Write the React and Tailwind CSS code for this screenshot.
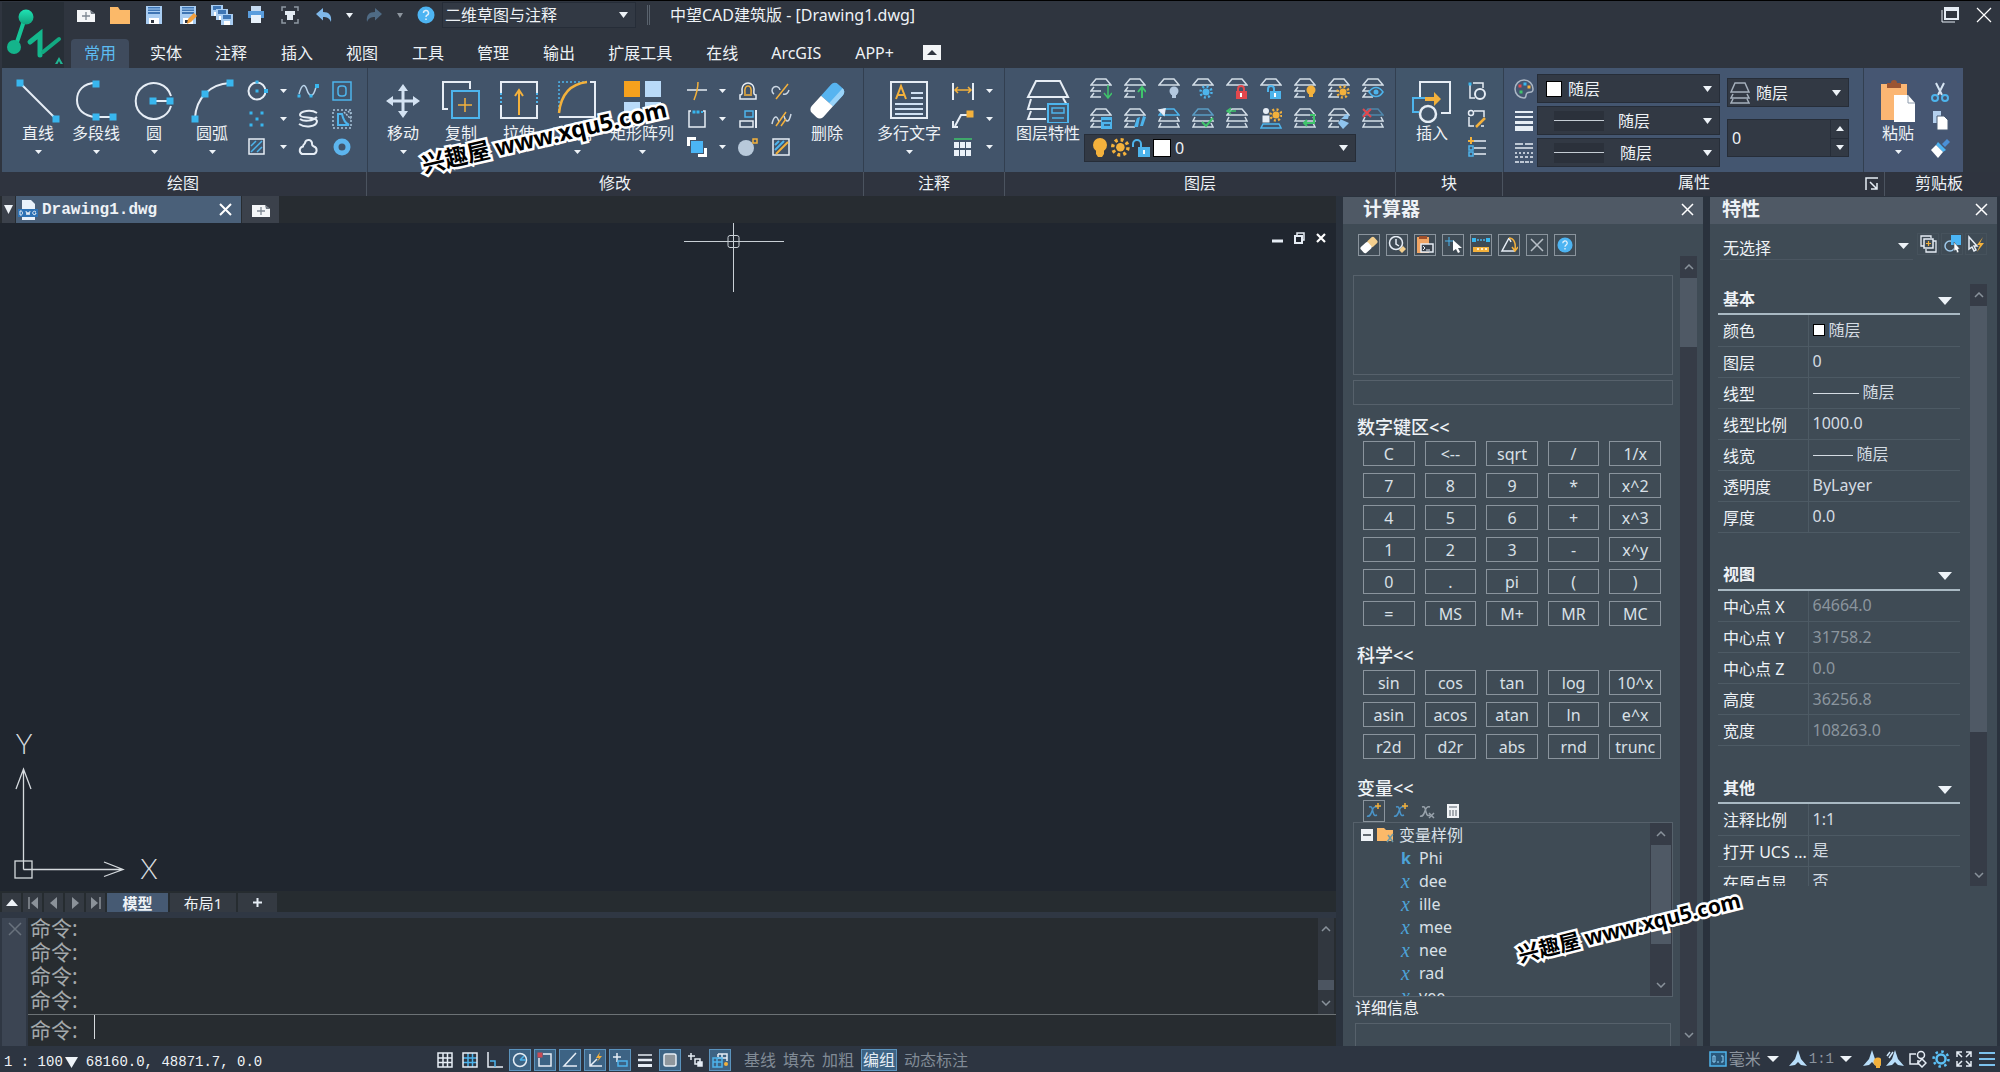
import React from "react";

const W = "#e6edf5";
const B = "#4db4ec";
const O = "#f3b13c";
const G = "#3fc46b";
const R = "#e2484d";

const Icon = ({ size = 22, w, h, children }) => (
  <svg
    width={w || size}
    height={h || size}
    viewBox={`0 0 ${w || size} ${h || size}`}
    fill="none"
    stroke={W}
    strokeWidth="1.5"
    className="block shrink-0"
    aria-hidden="true"
  >
    {children}
  </svg>
);

const Sq = ({ x, y, s = 6, c = "#38b6ee" }) => <rect x={x - s / 2} y={y - s / 2} width={s} height={s} fill={c} stroke="none" />;

const Caret = ({ w = 8, h = 5, className = "fill-[#eef3f8]" }) => (
  <svg width={w} height={h} viewBox="0 0 10 6" preserveAspectRatio="none" className={`block shrink-0 ${className}`} aria-hidden="true">
    <path d="M0 0h10l-5 6z" />
  </svg>
);

const Cross = ({ size = 14, sw = 1.5, color = "#fff" }) => (
  <Icon size={size}>
    <path d={`M1 1L${size - 1} ${size - 1}M${size - 1} 1L1 ${size - 1}`} stroke={color} strokeWidth={sw} />
  </Icon>
);

const Help = ({ size = 18 }) => (
  <svg width={size} height={size} viewBox="0 0 18 18" className="block" aria-hidden="true">
    <circle cx="9" cy="9" r="8.5" fill="#4db4f2" />
    <path d="M6.5 7a2.5 2.5 0 1 1 3.6 2.2c-.8.5-1.1.8-1.1 1.8M9 12.5v1.6" fill="none" stroke="#dff0fc" strokeWidth="1.5" />
  </svg>
);

/* ---------- quick access ---------- */

const NewFile = () => (
  <Icon w={18} h={14}>
    <path d="M0 2h13l5 4v8H0z" fill="#f4f6f8" stroke="none" />
    <path d="M13 2l5 4h-4z" fill="#6d7680" stroke="none" />
    <path d="M9 4v8M5 8h8" stroke="#7d8792" strokeWidth="1.3" />
  </Icon>
);

const Floppy = ({ pen }) => (
  <Icon size={18}>
    <path d="M1 0h16v18H1z" fill="#a9cdf2" stroke="none" />
    <path d="M3 1h12v7H3z" fill="#3f76b5" stroke="none" />
    <path d="M3 3h12M3 5.500h12" stroke="#a9cdf2" strokeWidth="1" />
    <path d="M4 12h10v6H4z" fill="#fff" stroke="none" />
    <path d="M6 14h3v3H6z" fill="#2f353f" stroke="none" />
    {pen && <path d="M8 18l1-5 6-6 3 3-6 6z" fill="#f3a03c" stroke="none" />}
  </Icon>
);

const Folder = () => (
  <Icon w={20} h={18}>
    <path d="M0 1h8l2 3h10v14H0z" fill="#fbb969" stroke="none" />
  </Icon>
);

const SaveAll = () => (
  <Icon w={22} h={20}>
    {[[0, 0], [5, 4], [10, 9]].map(([x, y]) => (
      <g key={x} stroke="none">
        <rect x={x} y={y} width="12" height="11" fill="#a9cdf2" />
        <rect x={x + 2} y={y + 1} width="8" height="4" fill="#3f76b5" />
        <rect x={x + 3} y={y + 7} width="6" height="4" fill="#fff" />
      </g>
    ))}
  </Icon>
);

const Printer = () => (
  <Icon size={18}>
    <path d="M4 0h10v5H4z" fill="#c5daf0" stroke="none" />
    <path d="M1 5h16v7H1z" fill="#5a9ddd" stroke="none" />
    <path d="M4 9h10v8H4z" fill="#e8f1fa" stroke="none" />
  </Icon>
);

const Preview = () => (
  <Icon size={18}>
    <path d="M1 5V1h4M13 1h4v4M17 13v4h-4M5 17H1v-4" stroke="#8e98a3" />
    <path d="M4 5h10v4h-2v5H6V9H4z" fill="#e3ebf3" stroke="none" />
  </Icon>
);

const Arrow = ({ flip, color }) => (
  <Icon w={16} h={14}>
    <g transform={flip ? "matrix(-1 0 0 1 16 0)" : undefined}>
      <path d="M0 6l7-6v4c6 0 9 3 8 10-1.500-4-4-5-8-5v3.500z" fill={color} stroke="none" />
    </g>
  </Icon>
);

const Logo = () => (
  <svg width="67" height="68" viewBox="0 0 67 68" className="block shrink-0" aria-label="ZWCAD">
    <defs>
      <linearGradient id="lg" x1="0" y1="0" x2="0" y2="1">
        <stop offset="0" stopColor="#1fe3b4" />
        <stop offset="1" stopColor="#11a27c" />
      </linearGradient>
    </defs>
    <rect x="2" y="1" width="62" height="67" fill="#272e36" />
    <g fill="none" stroke="#16c698" strokeLinecap="round">
      <path d="M25 17L15 47" strokeWidth="4" />
      <path d="M30 41l10-8v21" strokeWidth="5" stroke="#14b78c" />
      <path d="M43 51l16-13" strokeWidth="4" stroke="#12a981" />
    </g>
    <circle cx="26" cy="16" r="7.500" fill="url(#lg)" />
    <circle cx="14" cy="46" r="7" fill="#14b48b" />
    <path d="M55 63l4-7 4 7h-2.500l-1.500-3-1.500 3z" fill="#21b593" />
  </svg>
);

/* ---------- ribbon: large icons ---------- */

const LineIcon = () => (
  <Icon size={44}>
    <path d="M4 4l36 36" strokeWidth="2" />
    <Sq x={4} y={4} s={7} /><Sq x={40} y={40} s={7} />
  </Icon>
);
const PolylineIcon = () => (
  <Icon size={44}>
    <path d="M22 4C9 4 3 12 3 21s6 16 19 17h16" strokeWidth="2" />
    <Sq x={22} y={5} s={7} /><Sq x={22} y={38} s={7} /><Sq x={39} y={38} s={7} />
  </Icon>
);
const CircleIcon = () => (
  <Icon size={44}>
    <path d="M39 17A18 18 0 1 0 39 27" strokeWidth="2" />
    <path d="M21 22h17" strokeWidth="2" />
    <Sq x={21} y={22} s={7} /><Sq x={38} y={22} s={7} />
  </Icon>
);
const ArcIcon = () => (
  <Icon size={44}>
    <path d="M5 39C6 20 19 5 40 4" strokeWidth="2" />
    <Sq x={5} y={40} s={7} /><Sq x={15} y={15} s={7} /><Sq x={40} y={4} s={7} />
  </Icon>
);
const MoveIcon = () => (
  <Icon size={44}>
    <path d="M22 10v24M10 22h24" strokeWidth="3" stroke="#d3e2f2" />
    <path d="M22 5l5 7H17zM22 39l5-7H17zM5 22l7-5v10zM39 22l-7-5v10z" fill="#d3e2f2" stroke="none" />
  </Icon>
);
const CopyIcon = () => (
  <Icon size={44}>
    <path d="M9 30H4V3h27v7" strokeWidth="2" />
    <rect x="13" y="12" width="27" height="27" stroke={B} strokeWidth="2" />
    <path d="M26 19v14M19 26h14" stroke={O} />
  </Icon>
);
const StretchIcon = () => (
  <Icon size={44}>
    <path d="M4 14V3h36v11M4 26v13h36V26" strokeWidth="2" />
    <path d="M4 14v12M40 14v12" stroke={B} strokeWidth="2" strokeDasharray="2 2" />
    <path d="M22 36V12M18 17l4-6 4 6" stroke={O} strokeWidth="2" />
  </Icon>
);
const FilletIcon = () => (
  <Icon size={44}>
    <path d="M4 38h36V3h-5" strokeWidth="2" />
    <path d="M4 32V3h28" stroke={B} strokeDasharray="2 2" />
    <path d="M4 34C6 15 15 5 32 3" stroke={O} strokeWidth="2.500" />
  </Icon>
);
const ArrayIcon = () => (
  <Icon size={44}>
    <Sq x={12} y={10} s={16} c="#f6a11d" /><Sq x={33} y={10} s={16} c="#b9daf8" />
    <Sq x={12} y={31} s={16} c="#b9daf8" /><Sq x={33} y={31} s={16} c="#b9daf8" />
  </Icon>
);
const EraserIcon = () => (
  <Icon size={44}>
    <g transform="rotate(42 22 22)" stroke="none">
      <path d="M14 22V7a5 5 0 0 1 5-5h6a5 5 0 0 1 5 5v15z" fill="#57b4f0" />
      <path d="M25 2a5 5 0 0 1 5 5v15h-5z" fill="#9ad3f8" />
      <path d="M14 22h16v14a5 5 0 0 1-5 5h-6a5 5 0 0 1-5-5z" fill="#fff" />
    </g>
  </Icon>
);
const MTextIcon = () => (
  <Icon size={44}>
    <rect x="4" y="3" width="36" height="36" strokeWidth="2" />
    <path d="M9 20l5-13 5 13M11 16h6" stroke={O} strokeWidth="2" />
    <path d="M24 14h12M24 19h12M8 25h28M8 30h28M8 35h28" stroke="#cfe0f2" strokeWidth="2" />
  </Icon>
);
const LayersIcon = () => (
  <Icon size={44}>
    <path d="M10 2h24l8 16H2z" strokeWidth="2" />
    <path d="M5 20l-3 10h18M5 32l-3 8h18" strokeWidth="2" />
    <path d="M37 19l4 7" strokeWidth="2" />
    <rect x="22" y="25" width="20" height="19" stroke={B} strokeWidth="2" fill="#42556a" />
    <path d="M26 29h12v5H26zM26 39h12" stroke={B} />
  </Icon>
);
const InsertIcon = () => (
  <Icon size={44}>
    <path d="M10 18V3h30v31h-9" strokeWidth="2" />
    <path d="M3 34V19h12M3 33h6" stroke={B} strokeWidth="2" />
    <path d="M15 18h9v-5l7 7-7 7v-5h-9z" fill={O} stroke="none" />
    <circle cx="18" cy="35" r="8" strokeWidth="2.500" fill="#43566b" />
  </Icon>
);
const PasteIcon = () => (
  <Icon size={44}>
    <path d="M5 5h26v36H5z" fill="#fbb673" stroke="none" />
    <path d="M11 4h4a3 3 0 0 1 6 0h4v5H11z" fill="#9c5532" stroke="none" />
    <path d="M18 16h14l7 8v19H18z" fill="#fff" stroke="none" />
    <path d="M32 16v8h7" stroke="#8e9cad" strokeWidth="1" />
  </Icon>
);

/* ---------- ribbon: small icons ---------- */

const draw = {
  ellipse: <><circle cx="11" cy="11" r="8.500" strokeWidth="2" /><Sq x={11} y={11} s={3} /><Sq x={20} y={11} s={4} /><Sq x={11} y={2} s={3} /></>,
  spline: <><path d="M2 14C5 3 8 4 10 10s6 9 9-3" stroke="#b9d3ea" /><Sq x={2} y={16} s={3} /><Sq x={20} y={6} s={4} /><Sq x={14} y={16} s={3} /></>,
  region: <><rect x="2" y="2" width="18" height="18" stroke={B} /><rect x="7" y="6" width="8" height="10" rx="3" stroke={B} /></>,
  points: <><Sq x={5} y={5} s={3} /><Sq x={16} y={5} s={3} /><Sq x={11} y={11} s={3} /><Sq x={5} y={17} s={3} /><Sq x={16} y={17} s={3} /></>,
  helix: <><path d="M20 5C14 1 3 3 3 7s16 1 17 6c0 6-12 7-18 3M3 11c4 3 13 2 17-2" strokeWidth="2" /></>,
  wipeout: <><rect x="2" y="2" width="18" height="18" stroke="#a9c4da" strokeDasharray="2 2" /><path d="M7 17V6h4c1 5 3 9 7 11z" stroke={B} strokeWidth="2" /><path d="M13 4l7 7M17 3l3 3" stroke="#a9c4da" strokeDasharray="2 1" /></>,
  hatch: <><rect x="3" y="3" width="15" height="15" strokeWidth="1.500" /><path d="M5 10l5-5M5 16L16 5M11 16l5-5" stroke={B} /></>,
  cloud: <><path d="M5 18a4 4 0 0 1 1-7.500C6 8 8 8 8 7a3.500 3.500 0 0 1 7 1c0 2 1 2 2 2.500A4 4 0 0 1 17 18z" strokeWidth="2" /></>,
  donut: <><circle cx="11" cy="11" r="6" stroke="#5db5ee" strokeWidth="5" /></>,
};

const modify = {
  trim: <><path d="M1 10h20" /><path d="M8 20c2-5 4-10 4-18" stroke={O} /></>,
  offset: <><path d="M3 19h16v-4c-3 0-2-3-2-6a6 6 0 0 0-12 0c0 3 1 6-2 6z" /><path d="M7 15h8M8 14c-1-6 1-8 3-8s4 2 3 8" stroke={O} /></>,
  breakAt: <><path d="M4 14a4 4 0 1 1 6-4M13 14c3 1 5-1 6-4" stroke="#cdd8e4" /><path d="M6 19L18 4" stroke={O} /></>,
  explode: <><path d="M5 3H3v16h16V3h-2" /><Sq x={8} y={4} s={3} /><Sq x={12} y={4} s={3} /><Sq x={16} y={4} s={2} /></>,
  align: <><path d="M19 2v18" strokeWidth="2" /><rect x="8" y="3" width="8" height="6" stroke={B} /><rect x="3" y="13" width="13" height="6" /></>,
  join: <><path d="M2 16c2-9 5-9 7-2M14 8c2 7 5 7 7-2" stroke="#cdd8e4" /><path d="M6 18L16 4M11 18l5-7" stroke={O} /></>,
  order: <><path d="M1 1h9v3H4v6H1zM21 21h-9v-3h6v-6h3z" fill="#fff" stroke="none" /><rect x="5" y="5" width="12" height="12" fill="#4bb5f5" stroke="none" /></>,
  sphere: <><circle cx="9" cy="12" r="8" fill="#b8c9da" stroke="none" /><path d="M16 3h4v4h-4z" stroke={O} /></>,
  editHatch: <><rect x="3" y="3" width="16" height="16" /><path d="M5 9l4-4M5 14l9-9" stroke={B} strokeWidth="2" /><path d="M6 18L18 6" stroke={O} strokeWidth="2" /></>,
};

const annotate = {
  dim: <><path d="M1 3v17M21 3v17" strokeWidth="2" /><path d="M3 10h16M6 7l-3 3 3 3M16 7l3 3-3 3" stroke={O} /></>,
  leader: <><path d="M3 18L9 7h6M1 13v6h5" strokeWidth="2" /><Sq x={18} y={6} s={7} c={O} /></>,
  table: <><path d="M2 3h18" stroke={G} /><g fill="#eaf1f8" stroke="none">{[2, 8, 14].map((x) => <g key={x}><rect x={x} y="6" width="5" height="6" /><rect x={x} y="14" width="5" height="6" /></g>)}</g></>,
};

const block = {
  create: <><path d="M4 4v14h5M7 3h10v5" /><Sq x={4} y={4} s={3} /><circle cx="14" cy="14" r="5" strokeWidth="2" /></>,
  edit: <><path d="M3 9v9h5M8 3h10v6M15 18h3" /><circle cx="5" cy="5" r="2.500" /><path d="M10 19l9-9" stroke={O} strokeWidth="2.500" /></>,
  attr: <><path d="M8 5h12M8 12h12M8 18h12" /><path d="M5 1v7M2 5h6" stroke={O} strokeWidth="2" /><rect x="3" y="10" width="4" height="4" stroke={B} /><rect x="3" y="16" width="4" height="4" stroke={B} /></>,
};

const clip = {
  cut: <><path d="M7 2l6 12M15 2L9 14" stroke="#d6e4f2" strokeWidth="2" /><circle cx="6" cy="17" r="3" stroke={B} strokeWidth="2" /><circle cx="16" cy="17" r="3" stroke={B} strokeWidth="2" /></>,
  copy: <><path d="M4 2h8v12H4z" fill="#b4d0ee" stroke="none" /><path d="M8 7h7l4 4v10H8z" fill="#fff" stroke="#4a5c74" strokeWidth="1" /></>,
  brush: <><path d="M13 7l5-5 3 3-5 5z" fill="#4a90d8" stroke="none" /><path d="M9 5l8 8-3 2-7-7z" fill="#4db4f2" stroke="none" /><path d="M7 8l7 7-5 6-7-8z" fill="#fff" stroke="none" /></>,
};

const Sun = ({ x, y, c }) => (
  <g stroke={c} strokeWidth="1.500">
    <circle cx={x} cy={y} r="3.500" fill={c} stroke="none" />
    <circle cx={x} cy={y} r="5.500" strokeDasharray="2 2.300" strokeWidth="2.500" />
  </g>
);
const Bulb = ({ x, y, c }) => (
  <g fill={c} stroke="none"><circle cx={x} cy={y} r="4.500" /><rect x={x - 2} y={y + 3} width="4" height="4" /></g>
);
const Lock = ({ x, y, c, open }) => (
  <g>
    <path d={open ? `M${x - 7} ${y + 1}v-3a3 3 0 0 1 6 0v3` : `M${x - 3} ${y + 1}v-3a3 3 0 0 1 6 0v3`} stroke={c} strokeWidth="2" />
    <rect x={x - 5} y={y} width="11" height="8" fill={c} stroke="none" />
    <path d={`M${x} ${y + 2}v4`} stroke="#fff" strokeWidth="2" />
  </g>
);

const LayerTop = ({ c = "#d3dee8" }) => <path d="M6 2h10l5 6H1z" stroke={c} />;
const LayerHalf = () => <path d="M4 10l-3 4h10M4 16l-3 4h10" stroke="#d3dee8" />;
const LayerFull = () => <path d="M3 10l-2 4h20l-2-4M3 16l-2 4h20l-2-4" stroke="#d3dee8" />;

const layerTools = [
  ["图层下移", <><LayerTop /><LayerHalf /><path d="M18 8v12M14 16l4 5 4-5" stroke={G} /></>],
  ["图层上移", <><LayerTop /><LayerHalf /><path d="M18 21V11M14 15l4-5 4 5" stroke={G} strokeWidth="2" /></>],
  ["图层关闭", <><LayerTop /><Bulb x={16} y={14} c="#b3c8df" /></>],
  ["图层冻结", <><LayerTop /><Sun x={14} y={15} c={B} /></>],
  ["图层锁定", <><LayerTop /><Lock x={15} y={14} c={R} /></>],
  ["图层解锁", <><LayerTop /><Lock x={15} y={14} c={B} open /></>],
  ["打开所有图层", <><LayerTop /><LayerHalf /><Bulb x={17} y={13} c={O} /></>],
  ["解冻所有图层", <><LayerTop /><LayerHalf /><Sun x={15} y={15} c={O} /></>],
  ["图层浏览", <><LayerTop /><LayerHalf /><path d="M7 15c4-6 10-6 14 0-4 6-10 6-14 0z" stroke={B} fill="#42556a" /><circle cx="14" cy="15" r="2.500" fill={B} stroke="none" /></>],
  ["图层状态", <><LayerTop /><LayerHalf /><path d="M11 10h11v12H11z" fill={B} stroke="none" /><path d="M12 14h9M14 18h6" stroke="#2c4a68" /></>],
  ["图层漫游", <><LayerTop /><LayerHalf /><path d="M10 20l3-9 3-1-2 10zM16 19l3-10 3 1-3 9z" fill={B} stroke="none" /></>],
  ["设为当前图层", <><LayerTop c={B} /><LayerFull /><path d="M1 3l6-1-1 6z" fill="#eef" /></>],
  ["图层匹配", <><LayerTop c="#5a9cc4" /><LayerFull /><path d="M10 15l4 4 7-8" stroke={G} strokeWidth="2" /></>],
  ["上一个图层", <><LayerTop /><LayerFull /><path d="M5 1L1 4l4 3M2 4h8" stroke={G} /></>],
  ["图层隔离", <><circle cx="6" cy="4" r="3" fill={W} stroke="none" /><Sq x={6} y={12} s={7} c={W} /><path d="M1 21h20l-2-4H3z" stroke={B} fill="none" /><Sun x={16} y={8} c={O} /></>],
  ["取消隔离", <><LayerTop /><LayerFull /><path d="M16 8h4v8h-9M13 13l-3 3 3 3" stroke={G} strokeWidth="2" /></>],
  ["图层合并", <><LayerTop /><LayerHalf /><path d="M12 12l8 0 1-4-3-1-5 5-3 4 5 6 6-6z" fill="#8fc4ee" stroke="none" /></>],
  ["图层删除", <><LayerTop c="#4f86ab" /><LayerFull /><path d="M1 2l8 8M9 2l-8 8" stroke={R} strokeWidth="2" /></>],
];

/* ---------- ribbon building blocks ---------- */

const BigButton = ({ icon, label, caret, wide }) => (
  <button type="button" className={`flex flex-col items-center shrink-0 pt-[11px] ${wide ? "w-[72px]" : "w-[58px]"}`}>
    {icon}
    <span className="text-base leading-5 whitespace-nowrap">{label}</span>
    {caret && <span className="pt-[7px]"><Caret w={7} h={4} /></span>}
  </button>
);

const Tool = ({ label, w, children }) => (
  <button type="button" aria-label={label} className={`flex items-center justify-center h-7 shrink-0 ${w}`}>
    <Icon>{children}</Icon>
  </button>
);

const Drop = ({ w, label = "更多" }) => (
  <button type="button" aria-label={label} className={`flex items-center justify-center h-7 shrink-0 ${w}`}>
    <Caret w={7} h={4} />
  </button>
);

const Combo = ({ label, value, className = "", children, selectClass = "pl-1" }) => (
  <label className={`flex items-center border border-[#262d38] bg-[#323944] pr-[7px] ${className}`}>
    {children}
    <select aria-label={label} className={`flex-1 min-w-0 appearance-none bg-transparent outline-none text-base leading-5 ${selectClass}`}>
      <option>{value}</option>
    </select>
    <Caret w={9} h={6} />
  </label>
);

const Sample = () => (
  <span className="flex items-center w-[50px] h-5 ml-4 bg-[#2b313b]"><span className="w-full h-px bg-[#c5ccd4]" /></span>
);

const ribbonLabels = [
  ["绘图", "w-[367px]"],
  ["修改", "w-[497px]"],
  ["注释", "w-[141px]"],
  ["图层", "w-[391px]"],
  ["块", "w-[107px]"],
];

const Ribbon = () => (
  <div className="shrink-0">
    <div className="flex h-[104px] pl-0.5">
      <section aria-label="绘图" className="flex w-[366px] pl-[7px] bg-[#42546a] border-r border-[#323f50]">
        <BigButton icon={<LineIcon />} label="直线" caret />
        <BigButton icon={<PolylineIcon />} label="多段线" caret />
        <BigButton icon={<CircleIcon />} label="圆" caret />
        <BigButton icon={<ArcIcon />} label="圆弧" caret />
        <div className="pt-[9px]">
          <div className="flex"><Tool label="椭圆" w="w-8">{draw.ellipse}</Tool><Drop w="w-5" /><Tool label="样条曲线" w="w-[30px]">{draw.spline}</Tool><Tool label="面域" w="w-[38px]">{draw.region}</Tool></div>
          <div className="flex"><Tool label="点" w="w-8">{draw.points}</Tool><Drop w="w-5" /><Tool label="螺旋" w="w-[30px]">{draw.helix}</Tool><Tool label="区域覆盖" w="w-[38px]">{draw.wipeout}</Tool></div>
          <div className="flex"><Tool label="图案填充" w="w-8">{draw.hatch}</Tool><Drop w="w-5" /><Tool label="修订云线" w="w-[30px]">{draw.cloud}</Tool><Tool label="圆环" w="w-[38px]">{draw.donut}</Tool></div>
        </div>
      </section>

      <section aria-label="修改" className="flex w-[496px] pl-[6px] bg-[#42546a] border-r border-[#323f50]">
        <BigButton icon={<MoveIcon />} label="移动" caret />
        <BigButton icon={<CopyIcon />} label="复制" />
        <BigButton icon={<StretchIcon />} label="拉伸" caret />
        <BigButton icon={<FilletIcon />} label="圆角" caret />
        <BigButton icon={<ArrayIcon />} label="矩形阵列" caret wide />
        <div className="pt-[9px]">
          <div className="flex"><Tool label="修剪" w="w-[38px]">{modify.trim}</Tool><Drop w="w-3" /><Tool label="偏移" w="w-10">{modify.offset}</Tool><Tool label="打断" w="w-[26px]">{modify.breakAt}</Tool></div>
          <div className="flex"><Tool label="分解" w="w-[38px]">{modify.explode}</Tool><Drop w="w-3" /><Tool label="对齐" w="w-10">{modify.align}</Tool><Tool label="合并" w="w-[26px]">{modify.join}</Tool></div>
          <div className="flex"><Tool label="绘图次序" w="w-[38px]">{modify.order}</Tool><Drop w="w-3" /><Tool label="三维" w="w-10">{modify.sphere}</Tool><Tool label="编辑填充" w="w-[26px]">{modify.editHatch}</Tool></div>
        </div>
        <div className="pl-1"><BigButton icon={<EraserIcon />} label="删除" /></div>
      </section>

      <section aria-label="注释" className="flex w-[141px] pl-[9px] bg-[#42546a] border-r border-[#323f50]">
        <BigButton icon={<MTextIcon />} label="多行文字" caret wide />
        <div className="pt-[9px]">
          <div className="flex"><Tool label="标注" w="w-9">{annotate.dim}</Tool><Drop w="w-4" /></div>
          <div className="flex"><Tool label="引线" w="w-9">{annotate.leader}</Tool><Drop w="w-4" /></div>
          <div className="flex"><Tool label="表格" w="w-9">{annotate.table}</Tool><Drop w="w-4" /></div>
        </div>
      </section>

      <section aria-label="图层" className="flex w-[391px] pl-[7px] bg-[#42546a] border-r border-[#323f50]">
        <BigButton icon={<LayersIcon />} label="图层特性" wide />
        <div className="pt-[5px]">
          <div className="grid grid-cols-[repeat(9,34px)]">
            {layerTools.map(([label, art]) => (
              <button key={label} type="button" aria-label={label} className="flex items-center justify-center h-[30px]">
                <Icon>{art}</Icon>
              </button>
            ))}
          </div>
          <Combo label="当前图层" value="0" className="w-[272px] h-7 mt-px pl-1.5">
            <Icon w={18} h={22}><g fill={O} stroke="none"><circle cx="9" cy="8" r="7" /><path d="M5 13h8v4l-2 3H7l-2-3z" /></g></Icon>
            <Icon><g transform="translate(2 1) scale(0.850)"><circle cx="11" cy="11" r="5" fill={O} stroke="none" /><circle cx="11" cy="11" r="9" stroke={O} strokeWidth="4" strokeDasharray="3.500 3.570" /></g></Icon>
            <Icon w={20} h={20}><path d="M2 9V6a4 4 0 0 1 8 0v4" stroke={B} strokeWidth="2" /><rect x="7" y="9" width="12" height="10" fill={B} stroke="none" /><path d="M13 12v4" stroke="#fff" strokeWidth="2" /></Icon>
            <span className="w-[18px] h-[18px] ml-0.5 bg-white border border-black" />
          </Combo>
        </div>
      </section>

      <section aria-label="块" className="flex w-[108px] pl-[7px] bg-[#42566b] border-r border-[#323f50]">
        <BigButton icon={<InsertIcon />} label="插入" />
        <div className="pt-[9px]">
          <Tool label="创建块" w="w-8">{block.create}</Tool>
          <Tool label="编辑块" w="w-8">{block.edit}</Tool>
          <Tool label="块属性" w="w-8">{block.attr}</Tool>
        </div>
      </section>

      <section aria-label="属性" className="flex w-[360px] pl-[9px] bg-[#445670] border-r border-[#323f50]">
        <div className="pt-1.5 flex flex-col gap-[3px]">
          <div className="flex items-center gap-0.5">
            <Icon><path d="M11 2a9 9 0 1 0 0 18c3 0 1-3 3-5s6 1 6-4c0-5-4-9-9-9z" stroke="#aab6c4" /><Sq x={7} y={8} s={3} c={R} /><Sq x={12} y={6} s={3} /><Sq x={16} y={9} s={3} c={O} /><Sq x={8} y={14} s={3} c={G} /></Icon>
            <Combo label="颜色" value="随层" className="w-[183px] h-[29px] pl-2" selectClass="pl-1.5"><span className="w-4 h-4 bg-white border border-black" /></Combo>
          </div>
          <div className="flex items-center gap-0.5">
            <Icon><path d="M2 2h18M2 7h18" strokeWidth="2" /><path d="M2 12.500h18" strokeWidth="3" /><path d="M2 18.500h18" strokeWidth="5" /></Icon>
            <Combo label="线宽" value="随层" className="w-[183px] h-[29px]" selectClass="pl-3.5"><Sample /></Combo>
          </div>
          <div className="flex items-center gap-0.5">
            <Icon><path d="M2 2h18" strokeDasharray="8 2" /><path d="M2 6h18" /><path d="M2 11h18" strokeDasharray="2 2" /><path d="M2 15h18" strokeDasharray="3 2" /><path d="M2 20h18" strokeDasharray="4 1" /></Icon>
            <Combo label="线型" value="随层" className="w-[183px] h-[29px]" selectClass="pl-4"><Sample /></Combo>
          </div>
        </div>
        <div className="pl-[7px] pt-2.5 flex flex-col gap-3">
          <Combo label="打印样式" value="随层" className="w-[122px] h-[29px] pl-0.5" selectClass="pl-1.5">
            <Icon w={20} h={22}><path d="M5 1h10l4 9H1zM3 12l-2 4h18l-2-4M3 17l-2 4h18l-2-4" stroke="#a5b0bc" /></Icon>
          </Combo>
          <div className="flex w-[122px] h-[38px] border border-[#262d38] bg-[#323944]">
            <input aria-label="透明度" defaultValue="0" className="flex-1 min-w-0 bg-transparent pl-1 text-base outline-none" />
            <div className="flex flex-col w-[18px] border-l border-[#262d38]">
              <button type="button" aria-label="增加" className="flex-1 flex items-center justify-center border-b border-[#262d38]"><span className="rotate-180"><Caret /></span></button>
              <button type="button" aria-label="减少" className="flex-1 flex items-center justify-center"><Caret /></button>
            </div>
          </div>
        </div>
      </section>

      <section aria-label="剪贴板" className="flex w-[99px] pl-[5px] bg-[#465672]">
        <BigButton icon={<PasteIcon />} label="粘贴" caret />
        <div className="pt-2.5">
          <Tool label="剪切" w="w-[26px]">{clip.cut}</Tool>
          <Tool label="复制到剪贴板" w="w-[26px]">{clip.copy}</Tool>
          <Tool label="特性匹配" w="w-[26px]">{clip.brush}</Tool>
        </div>
      </section>
    </div>

    <div className="flex h-6 bg-[#2f343f] text-base leading-[22px] text-center">
      {ribbonLabels.map(([t, w]) => (
        <span key={t} className={`${w} shrink-0 border-r border-[#4b535f]`}>{t}</span>
      ))}
      <span className="flex items-center w-[382px] shrink-0 border-r border-[#4b535f] pl-5">
        <span className="flex-1 leading-5 pb-1">属性</span>
        <button type="button" aria-label="属性设置" className="mr-[5px]">
          <Icon size={14}><path d="M1 13V1h12M5 5l7 7M12 6v6H6" /></Icon>
        </button>
      </span>
      <span className="w-[108px]">剪贴板</span>
    </div>
  </div>
);

/* ---------- title ---------- */

const menus = ["实体", "注释", "插入", "视图", "工具", "管理", "输出", "扩展工具", "在线", "ArcGIS", "APP+"];

const quick = [
  ["新建", <NewFile />], ["打开", <Folder />], ["保存", <Floppy />], ["另存为", <Floppy pen />],
  ["全部保存", <SaveAll />], ["打印", <Printer />], ["预览", <Preview />], ["撤销", <Arrow color="#7fb8ea" />],
];

const TitleBar = () => (
  <header className="flex shrink-0 h-[68px] bg-[#2f353f] border-t border-black">
    <Logo />
    <div className="flex-1 min-w-0">
      <div className="flex items-center h-7 pl-0.5">
        {quick.map(([label, art]) => (
          <button key={label} type="button" aria-label={label} className="flex justify-center w-[34px] shrink-0">{art}</button>
        ))}
        <button type="button" aria-label="撤销列表" className="flex justify-center w-4"><Caret w={7} h={5} /></button>
        <button type="button" aria-label="重做" className="flex justify-center w-[34px]"><Arrow flip color="#4f6b85" /></button>
        <button type="button" aria-label="重做列表" className="flex justify-center w-[18px]"><Caret w={6} h={5} className="fill-[#8d959e]" /></button>
        <button type="button" aria-label="帮助" className="flex justify-center w-[33px]"><Help /></button>
        <Combo label="工作空间" value="二维草图与注释" className="w-[194px] h-[26px]" selectClass="pl-0.5" />
        <span className="w-[3px] h-5 ml-[11px] border-x border-[#59626d]" />
        <h1 className="ml-5 text-base whitespace-nowrap">中望CAD建筑版 - [Drawing1.dwg]</h1>
        <div className="flex items-center gap-[17px] ml-auto pr-2">
          <button type="button" aria-label="还原"><Icon w={18} h={16}><path d="M4 1h13v11H4zM4 3h13" strokeWidth="2" /><path d="M1 3v12h13" strokeWidth="1" /></Icon></button>
          <button type="button" aria-label="关闭"><Cross size={16} sw={1.2} /></button>
        </div>
      </div>
      <nav className="flex items-end h-[39px] text-base">
        <a href="#home" className="h-[29px] mx-1 px-[13px] leading-7 rounded-t-sm bg-[#3f4b5d] text-[#5cbcf2]">常用</a>
        {menus.map((m) => (
          <a key={m} href={`#${m}`} className="h-[29px] pl-[17px] pr-4 last-of-type:pr-[17px] leading-7 whitespace-nowrap odd:pr-[17px]">{m}</a>
        ))}
        <button type="button" aria-label="收起功能区" className="flex items-center justify-center w-[18px] h-[15px] ml-3 mb-2 bg-[#f2f4f6]">
          <span className="rotate-180"><Caret w={10} h={5} className="fill-[#2f353f]" /></span>
        </button>
      </nav>
    </div>
  </header>
);

/* ---------- drawing area ---------- */

const FileTabs = () => (
  <div className="flex shrink-0 h-[27px] bg-[#272c31] pl-0.5">
    <button type="button" aria-label="文件列表" className="flex items-center justify-center w-[13px] bg-[#3b414b]"><Caret w={9} h={9} /></button>
    <div className="flex items-center w-[225px] ml-px pl-0.5 pr-[9px] bg-[#4a6079]">
      <Icon w={20} h={20}>
        <path d="M4 0h9l4 4v16H4z" fill="#e9f2fb" stroke="none" />
        <rect x="0" y="9" width="20" height="8" fill="#2d72b5" stroke="none" />
        <path d="M2 11v4h1c2 0 2-4 0-4zM8 11l1 4 1-3 1 3 1-4M18 12c-2-2-4 0-3 2 1 1 3 1 3-1h-1" strokeWidth="1" />
      </Icon>
      <span className="ml-1 font-['Liberation_Mono',monospace] font-bold text-base leading-6">Drawing1.dwg</span>
      <button type="button" aria-label="关闭文件" className="ml-auto"><Cross size={13} sw={2} /></button>
    </div>
    <button type="button" aria-label="新建文件" className="flex items-center justify-center w-[37px] ml-px bg-[#3b414b]"><NewFile /></button>
  </div>
);

const Canvas = () => (
  <div className="relative flex-1 min-h-0 bg-[#20262f] overflow-hidden">
    <svg width="100" height="70" viewBox="0 0 100 70" className="absolute top-0 left-[684px]" fill="none" stroke="#c9d0d6" aria-hidden="true">
      <path d="M0 18.500h100M49.500 0v69" />
      <rect x="44" y="12.500" width="11" height="12" rx="2" />
    </svg>
    <div className="absolute top-[9px] right-2.5 flex items-center gap-[11px]">
      <button type="button" aria-label="最小化"><Icon w={11} h={12}><path d="M0 9h11" strokeWidth="3" /></Icon></button>
      <button type="button" aria-label="还原窗口"><Icon w={11} h={12}><path d="M3 3V1h7v7H8" strokeWidth="1.500" /><path d="M1 4h7v7H1z" strokeWidth="2" /></Icon></button>
      <button type="button" aria-label="关闭窗口"><Cross size={10} sw={2.2} /></button>
    </div>
    <svg width="170" height="160" viewBox="0 0 170 160" className="absolute left-0 bottom-3" fill="none" stroke="#d5dade" strokeWidth="1.300" aria-label="UCS">
      <rect x="15" y="142" width="17" height="17" />
      <path d="M23.500 150.500V50M16 70l7.500-20L31 70M23.500 150.500H123M104 143l19 7.500-19 7" />
      <g fill="#d5dade" stroke="none" className="font-['Lato',sans-serif] font-light" fontSize="28" textAnchor="middle">
        <text x="24" y="35">Y</text>
        <text x="149" y="160">X</text>
      </g>
    </svg>
  </div>
);

const step = "flex items-center justify-center w-[19px] bg-[#343a42]";

const LayoutTabs = () => (
  <div className="flex shrink-0 h-[21px] pt-0.5 pl-0.5 bg-[#262c30]">
    <div className="flex gap-[2px]">
      <button type="button" aria-label="布局列表" className={step}><span className="rotate-180"><Caret w={12} h={7} /></span></button>
      <button type="button" aria-label="第一个" className={step}><Icon size={12}><path d="M2 0v12" stroke="#8b9299" /><path d="M11 0v12L4 6z" fill="#8b9299" stroke="none" /></Icon></button>
      <button type="button" aria-label="上一个" className={step}><Icon size={12}><path d="M9 0v12L2 6z" fill="#8b9299" stroke="none" /></Icon></button>
      <button type="button" aria-label="下一个" className={step}><Icon size={12}><path d="M3 0v12l7-6z" fill="#8b9299" stroke="none" /></Icon></button>
      <button type="button" aria-label="最后一个" className={step}><Icon size={12}><path d="M10 0v12" stroke="#8b9299" /><path d="M1 0v12l7-6z" fill="#8b9299" stroke="none" /></Icon></button>
      <button type="button" className="w-[61px] bg-[#465a73] text-[15px] leading-[18px] font-bold">模型</button>
      <button type="button" className="w-[66px] bg-[#343a42] text-[15px] leading-[18px]">布局1</button>
      <button type="button" aria-label="新建布局" className="flex items-center justify-center w-[39px] bg-[#343a42]"><Icon size={9}><path d="M4.500 0v9M0 4.500h9" strokeWidth="2" /></Icon></button>
    </div>
  </div>
);

const Chevron = ({ down }) => (
  <Icon w={10} h={6}><path d={down ? "M1 1l4 4 4-4" : "M1 5l4-4 4 4"} stroke="#89929b" /></Icon>
);

const CommandLine = () => (
  <div className="flex shrink-0 h-[134px] pt-1.5 pl-0.5 bg-[#2f3743]">
    <div className="w-6 shrink-0 pt-1 pl-0.5 flex justify-center bg-[#3c4553]">
      <button type="button" aria-label="关闭命令行" className="self-start"><Cross size={14} color="#69727d" /></button>
    </div>
    <div className="flex-1 min-w-0 flex flex-col ml-0.5 bg-[#272c30] text-[#a3a8ab] text-[21px]">
      <div className="flex justify-between h-[98px]">
        <div className="pl-0.5 -mt-0.5">
          {[0, 1, 2, 3].map((n) => <p key={n} className="leading-6">命令:</p>)}
        </div>
        <div className="flex flex-col items-center w-4 mr-0.5 py-2 bg-[#31373f]">
          <Chevron />
          <span className="w-4 h-2.5 mt-auto mb-2.5 bg-[#4c5561]" />
          <Chevron down />
        </div>
      </div>
      <label className="flex items-center flex-1 pl-0.5 border-t border-[#6c7275]">
        <span className="leading-7">命令:</span>
        <span className="w-px h-6 ml-4 self-start bg-[#d5dade]" />
        <input className="flex-1 bg-transparent outline-none" />
      </label>
    </div>
  </div>
);

/* ---------- calculator ---------- */

const PanelHeader = ({ title, className }) => (
  <div className={`flex items-center justify-between shrink-0 h-[27px] pb-[3px] bg-[#4f5965] pr-[9px] ${className}`}>
    <h2 className="text-[19px] leading-6 font-bold">{title}</h2>
    <button type="button" aria-label={`关闭${title}`}><Cross size={13} /></button>
  </div>
);

const calcTools = [
  ["清除", <><g transform="rotate(48 9 9)" stroke="none"><rect x="5" y="0" width="8" height="9" rx="2" fill="#f3cf8e" /><rect x="5" y="8" width="8" height="10" rx="2" fill="#fff" /></g></>],
  ["清除历史", <><circle cx="8" cy="7" r="6.500" /><path d="M8 3v5l3 2" /><path d="M11 14l4-4 3 3-4 4z" fill="#f3cf8e" stroke="none" /></>],
  ["粘贴到命令行", <><path d="M1 1h12v16H1z" fill="#f0a564" stroke="none" /><path d="M3 0h8v3H3z" fill="#a04f2a" stroke="none" /><rect x="5" y="8" width="12" height="8" fill="#3a434d" /><path d="M7 10l2 2-2 2M10 14h4" strokeWidth="1" /></>],
  ["获取坐标", <><path d="M5 1v9M1 5h9" stroke={B} strokeWidth="1" /><path d="M9 4v11l3-2 2 4 2-1-2-4h4z" fill="#fff" stroke="none" /></>],
  ["两点距离", <><path d="M2 4h14" stroke={B} strokeDasharray="2 1" /><Sq x={2} y={4} s={4} /><Sq x={16} y={4} s={4} /><path d="M1 11h16v5H1z" fill={O} stroke="none" /><path d="M5 13h2M9 13h2M13 13h2" stroke="#fff" /></>],
  ["角度", <><path d="M9 2L2 15h13M9 2l2 4" /><path d="M9 2c5 0 7 5 6 12M12 11l3 4 3-4" stroke={O} /></>],
  ["交点", <path d="M3 3l12 12M15 3L3 15" stroke="#b8c0c8" />],
];

const keypad = [
  "C", "<--", "sqrt", "/", "1/x",
  "7", "8", "9", "*", "x^2",
  "4", "5", "6", "+", "x^3",
  "1", "2", "3", "-", "x^y",
  "0", ".", "pi", "(", ")",
  "=", "MS", "M+", "MR", "MC",
];
const science = ["sin", "cos", "tan", "log", "10^x", "asin", "acos", "atan", "ln", "e^x", "r2d", "d2r", "abs", "rnd", "trunc"];
const variables = ["Phi", "dee", "ille", "mee", "nee", "rad", "vee"];

const Keys = ({ keys }) => (
  <div className="grid grid-cols-5 gap-x-2.5 gap-y-[7px] pl-2.5 pr-3">
    {keys.map((k) => (
      <button key={k} type="button" className="h-[25px] border border-[#8a949d] text-base leading-5 text-[#d9e0e7]">{k}</button>
    ))}
  </div>
);

const VarX = ({ mark }) => (
  <Icon w={18} h={18}>
    <path d="M2 14c3 1 4-2 5-5s2-5 5-4M4 5c3-1 3 1 4 5s2 4 4 3" stroke={mark === "x" ? "#98a2ab" : "#4a94c8"} />
    {mark === "+" ? <path d="M13 1v6M10 4h6" stroke={O} /> : <path d="M11 11l5 5M16 11l-5 5" stroke="#98a2ab" />}
  </Icon>
);

const Calculator = () => (
  <aside aria-label="计算器" className="flex flex-col w-[360px] shrink-0 bg-[#3f4b55]">
    <PanelHeader title="计算器" className="pl-5" />
    <div className="flex flex-1 min-h-0">
      <div className="flex flex-col w-[330px] pl-2.5 overflow-hidden">
        <div className="flex gap-1.5 shrink-0 pl-[5px] pt-2.5">
          {calcTools.map(([label, art]) => (
            <button key={label} type="button" aria-label={label} className="flex items-center justify-center w-[22px] h-[22px] border border-[#8a949d]">
              <Icon size={18}>{art}</Icon>
            </button>
          ))}
          <button type="button" aria-label="计算器帮助" className="flex items-center justify-center w-[22px] h-[22px] border border-[#8a949d]"><Help size={16} /></button>
        </div>
        <textarea aria-label="历史记录" className="block shrink-0 h-[100px] mt-[19px] resize-none bg-transparent border border-[#56616b] outline-none" />
        <input aria-label="表达式" className="shrink-0 h-[25px] mt-[5px] bg-transparent border border-[#56616b] outline-none" />
        <h3 className="shrink-0 pl-1 pt-2.5 pb-0.5 text-lg leading-6 font-medium">数字键区&lt;&lt;</h3>
        <Keys keys={keypad} />
        <h3 className="shrink-0 pl-1 pt-[17px] pb-[3px] text-lg leading-6 font-medium">科学&lt;&lt;</h3>
        <Keys keys={science} />
        <h3 className="shrink-0 pl-1 pt-[17px] text-lg leading-6 font-medium">变量&lt;&lt;</h3>
        <div className="flex items-center shrink-0 h-[22px] pl-2.5">
          <button type="button" aria-label="新建变量" className="flex items-center justify-center w-[22px] h-[22px] border border-[#8a949d]"><VarX mark="+" /></button>
          <button type="button" aria-label="编辑变量" className="flex justify-center w-8"><VarX mark="+" /></button>
          <button type="button" aria-label="删除变量" className="flex justify-center w-5"><VarX mark="x" /></button>
          <button type="button" aria-label="返回变量" className="flex justify-center w-8">
            <Icon w={12} h={14}><rect width="12" height="14" fill="#f1f4f7" stroke="none" /><path d="M2 3h8M2 7h2M5 7h2M8 7h2M2 9h2M5 9h2M8 9h2M2 11h2M5 11h2M8 11h2" stroke="#56616b" strokeWidth="1" /></Icon>
          </button>
        </div>
        <div className="flex shrink-0 h-[175px] border border-[#56616b] overflow-hidden">
          <div className="flex-1 pt-px pl-[7px] text-base text-[#d9e0e7]">
            <div className="flex items-center h-[22px]">
              <Icon w={12} h={12}><rect width="12" height="12" fill="#eef2f6" stroke="none" /><path d="M2 6h8" stroke="#333c46" /></Icon>
              <span className="ml-1"><Icon w={18} h={16}><path d="M0 1h7l2 2h7v11H0z" fill="#fbb969" stroke="none" /><path d="M10 15l6-8M11 8l5 7" stroke="#6e98a5" /></Icon></span>
              <span className="ml-1">变量样例</span>
            </div>
            <ul>
              {variables.map((v, i) => (
                <li key={v} className="flex items-center h-[23px] pl-10">
                  <span className={`w-4 text-[#4da3d8] ${i === 0 ? "font-bold" : "font-['Liberation_Serif',serif] italic text-xl leading-[18px]"}`}>{i === 0 ? "k" : "x"}</span>
                  <span className="ml-0.5">{v}</span>
                </li>
              ))}
            </ul>
          </div>
          <div className="flex flex-col items-center w-[22px] bg-[#363c47]">
            <span className="flex items-center h-[22px]"><Chevron /></span>
            <span className="w-5 h-[99px] bg-[#4f5965]" />
            <span className="flex items-center h-[22px] mt-auto"><Chevron down /></span>
          </div>
        </div>
        <label htmlFor="details" className="shrink-0 pl-0.5 pb-1 text-base leading-[22px]">详细信息</label>
        <textarea id="details" className="flex-1 min-h-0 mx-0.5 resize-none bg-transparent border border-b-0 border-[#56616b] outline-none" />
      </div>
      <div className="flex flex-col items-center w-[17px] ml-[7px] mt-8 bg-[#363c47]">
        <span className="flex items-center h-[22px]"><Chevron /></span>
        <span className="w-full h-[69px] bg-[#4f5965]" />
        <span className="flex items-center h-[22px] mt-auto"><Chevron down /></span>
      </div>
    </div>
  </aside>
);

/* ---------- properties ---------- */

const LineSample = ({ w }) => <span className={`inline-block h-px mr-1 align-middle bg-[#d5dce3] ${w}`} />;

const sections = [
  {
    title: "基本",
    rows: [
      ["颜色", <><span className="inline-block w-3 h-3 mr-1 bg-white border border-black" />随层</>],
      ["图层", "0"],
      ["线型", <><LineSample w="w-[46px]" />随层</>],
      ["线型比例", "1000.0"],
      ["线宽", <><LineSample w="w-10" />随层</>],
      ["透明度", "ByLayer"],
      ["厚度", "0.0"],
    ],
  },
  {
    title: "视图",
    muted: true,
    rows: [["中心点 X", "64664.0"], ["中心点 Y", "31758.2"], ["中心点 Z", "0.0"], ["高度", "36256.8"], ["宽度", "108263.0"]],
  },
  { title: "其他", rows: [["注释比例", "1:1"], ["打开 UCS ...", "是"], ["在原点显", "否"]] },
];

const Section = ({ title, rows, muted }) => (
  <section className="mb-[31px]">
    <h3>
      <button type="button" className="flex items-center justify-between w-full h-[27px] pl-[5px] pr-2 border-b-2 border-[#a9b9c3] text-base leading-5 font-bold">
        <span className="pb-1">{title}</span>
        <Caret w={14} h={8} />
      </button>
    </h3>
    <table className="w-full table-fixed border-collapse text-base leading-5">
      <tbody>
        {rows.map(([k, v]) => (
          <tr key={k} className="h-[31px] border-b border-[#4d5a64]">
            <th className="w-[90px] pl-[5px] pt-0.5 text-left font-normal whitespace-nowrap border-r border-[#4d5a64]">{k}</th>
            <td className={`pl-1 pb-px ${muted ? "text-[#8b959e]" : "text-[#d5dce3]"}`}>{v}</td>
          </tr>
        ))}
      </tbody>
    </table>
  </section>
);

const Properties = () => (
  <aside aria-label="特性" className="flex flex-col w-[287px] shrink-0 bg-[#3f4b55]">
    <PanelHeader title="特性" className="pl-3" />
    <div className="flex shrink-0 pl-2.5 pt-[9px]">
      <label className="flex items-center w-[193px] h-[27px] pl-[3px] pr-1 border-b border-[#4b5661]">
        <select aria-label="选择" className="flex-1 appearance-none bg-transparent outline-none text-base pt-1"><option>无选择</option></select>
        <Caret w={11} h={6} />
      </label>
      <div className="flex gap-0.5 ml-1">
        <button type="button" aria-label="快速选择" className="flex items-center justify-center w-[22px] h-[22px] border border-[#46525c]"><Icon size={18}><path d="M5 11H2V1h10v2M14 6h3v11H7v-3" strokeWidth="1.300" /><rect x="5" y="4" width="9" height="9" /><path d="M9.500 6v5M7 8.500h5" stroke={O} strokeWidth="1.200" /></Icon></button>
        <button type="button" aria-label="选择对象" className="flex items-center justify-center w-[22px] h-[22px] border border-[#46525c]"><Icon size={18}><circle cx="7" cy="11" r="5" stroke="#9fc9ea" /><rect x="8" y="0" width="10" height="10" fill="#4bb5f5" stroke="none" /><path d="M11 7v9l2-1 1 3 2-1-1-3h2z" fill="#fff" stroke="#3f4b55" strokeWidth=".6" /></Icon></button>
        <button type="button" aria-label="切换 PICKADD" className="flex items-center justify-center w-[22px] h-[22px] border border-[#46525c]"><Icon size={18}><path d="M2 2v12l3-2 2 4 2-1-2-4h3z" /><path d="M16 2l-6 8h3l-3 7 7-9h-4z" fill={O} stroke="none" /></Icon></button>
      </div>
    </div>
    <div className="flex justify-between shrink-0 h-[602px] mt-6 pl-2 pr-[10px] overflow-hidden">
      <div className="w-[242px] pt-1">
        {sections.map((s) => <Section key={s.title} {...s} />)}
      </div>
      <div className="flex flex-col items-center w-[17px] bg-[#363c47]">
        <span className="flex items-center h-[22px]"><Chevron /></span>
        <span className="w-full h-[426px] bg-[#4f5965]" />
        <span className="flex items-center h-[22px] mt-auto"><Chevron down /></span>
      </div>
    </div>
  </aside>
);

/* ---------- status bar ---------- */

const toggles = [
  ["捕捉", false, <path d="M1 1h14v14H1zM1 6h14M1 10.500h14M6 1v14M10.500 1v14" />],
  ["栅格", false, <><path d="M1 6h14M1 10.500h14M6 1v14M10.500 1v14" stroke={B} /><path d="M1 1h14v14H1z" /></>],
  ["正交", false, <><path d="M1 0v15h15" /><path d="M3 9h5v6" stroke={B} /></>],
  ["极轴", true, <><circle cx="8" cy="8" r="6.500" /><path d="M8 8h6M8 8l4-4" stroke={B} /></>],
  ["对象捕捉", true, <><path d="M6 2h8v12H2V6" /><Sq x={3} y={3} s={5} c="#c94b55" /></>],
  ["对象追踪", true, <path d="M14 1L2 14h13" />],
  ["动态 UCS", true, <><path d="M3 2v12h12M3 14l7-7" /><path d="M13 0L9 6h3l-2 4 5-6h-3z" fill={O} stroke="none" /></>],
  ["动态输入", true, <><path d="M5 1v9M1 5h8" /><rect x="6" y="9" width="9" height="5" stroke={B} /></>],
  ["线宽", false, <><path d="M1 3h14" /><path d="M1 8h14" strokeWidth="2.500" /><path d="M1 13.500h14" strokeWidth="3" /></>],
  ["透明度", true, <rect x="2" y="2" width="12" height="12" rx="2" fill="#8f969d" />],
  ["循环选择", false, <><path d="M4 1v7M1 4h7" /><rect x="8" y="7" width="5" height="5" /><rect x="11" y="10" width="4" height="4" fill={W} /></>],
  ["注释监视", true, <><path d="M6 2h9v7M6 2v3M10 2v5M6 6h9" /><path d="M1 6h9v9H1zM1 10h9M5 6v9" stroke={B} /><circle cx="14" cy="12" r="2" fill={O} stroke="none" /></>],
];

const Scale = ({ extra }) => (
  <Icon w={18} h={18}>
    <path d="M9 0l3 9 6 7-6-1-3-3-3 3-6 1 6-7z" fill="#b9defa" stroke="none" />
    {extra}
  </Icon>
);

const StatusBar = () => (
  <footer className="flex items-center justify-between shrink-0 h-[26px] bg-[#2d3541]">
    <div className="flex items-center">
      <div className="flex items-center w-[434px] pl-1 pt-1.5 font-['Liberation_Mono',monospace] text-sm leading-5 whitespace-pre">
        1 : 100<span className="ml-0.5 mr-2"><Caret w={13} h={11} /></span>68160.0, 48871.7, 0.0
      </div>
      <div className="flex gap-[3px] pt-0.5">
        {toggles.map(([label, on, art]) => (
          <button key={label} type="button" aria-label={label} aria-pressed={on} className={`flex items-center justify-center w-[22px] h-[22px] border ${on ? "bg-[#3d6384] border-[#5b93bd]" : "border-transparent"}`}>
            <Icon size={16}>{art}</Icon>
          </button>
        ))}
      </div>
      <div className="flex items-center gap-[7px] pl-[13px] pt-0.5 text-base leading-[22px] text-[#818b96]">
        <button type="button">基线</button>
        <button type="button">填充</button>
        <button type="button">加粗</button>
        <button type="button" className="w-9 border border-[#5b93bd] bg-[#3d6384] text-[#e6edf5] leading-5">编组</button>
        <button type="button">动态标注</button>
      </div>
    </div>
    <div className="flex items-center pr-1">
      <Icon w={18} h={16}><rect x="1" y="1" width="16" height="14" stroke={B} fill="#2a587b" /><path d="M4 5h2v6H4zM12 5h2v6h-2M9 10v2" stroke="#8fd0f7" strokeWidth="1" /></Icon>
      <span className="ml-0.5 text-base leading-5 text-[#8b949e]">毫米</span>
      <button type="button" aria-label="单位" className="ml-1.5"><Caret w={12} h={6} /></button>
      <span className="ml-2.5"><Scale /></span>
      <span className="ml-0.5 font-['Liberation_Mono',monospace] text-sm text-[#8b949e]">1:1</span>
      <button type="button" aria-label="注释比例" className="ml-1.5 mr-[11px]"><Caret w={12} h={6} /></button>
      <div className="flex items-center gap-[5px]">
        <button type="button" aria-label="注释可见性"><Scale extra={<Bulb x={15} y={12} c={O} />} /></button>
        <button type="button" aria-label="自动缩放"><Scale extra={<path d="M1 6l3-4M3 8l4-6" stroke="#cfe7fa" />} /></button>
        <button type="button" aria-label="隔离对象"><Icon size={18}><path d="M7 4H1v10h8v-4" /><circle cx="12" cy="5" r="3.500" /><path d="M13 9l4 4-4 4-4-4z" /></Icon></button>
        <button type="button" aria-label="设置"><Icon size={18}><circle cx="9" cy="9" r="4.500" stroke="#5cc0f5" strokeWidth="2.500" /><circle cx="9" cy="9" r="7.500" stroke="#5cc0f5" strokeWidth="2.500" strokeDasharray="2.500 3.390" /></Icon></button>
        <button type="button" aria-label="全屏显示"><Icon size={18}><path d="M2 7V2h5M2 2l5 5M11 2h5v5M16 2l-5 5M16 11v5h-5M16 16l-5-5M7 16H2v-5M2 16l5-5" /></Icon></button>
        <button type="button" aria-label="菜单"><Icon size={18}><path d="M1 3h16M1 9h16M1 15h16" stroke="#7cc2ee" strokeWidth="2" /></Icon></button>
      </div>
    </div>
  </footer>
);

const Watermark = ({ className }) => (
  <span className={`absolute pointer-events-none font-bold whitespace-nowrap text-black [paint-order:stroke_fill] [-webkit-text-stroke:5px_white] ${className}`}>
    兴趣屋 www.xqu5.com
  </span>
);

const App = () => (
  <div className="relative flex flex-col h-screen min-h-[900px] overflow-hidden bg-[#2a323d] text-[#eef2f6] font-['Noto_Sans','Noto_Sans_CJK_SC',sans-serif]">
    <TitleBar />
    <div className="bg-[#2f353f]"><Ribbon /></div>
    <main className="flex flex-1 min-h-0 pr-[3px]">
      <div className="flex flex-col flex-1 min-w-0 mr-[7px]">
        <FileTabs />
        <Canvas />
        <LayoutTabs />
        <CommandLine />
      </div>
      <div className="flex gap-[7px] pt-px">
        <Calculator />
        <Properties />
      </div>
    </main>
    <StatusBar />
    <Watermark className="top-[120px] left-[419px] text-[23px] leading-8 -rotate-[13deg]" />
    <Watermark className="top-[911px] left-[1515px] text-[21px] leading-8 -rotate-[14deg]" />
  </div>
);

export default App;
